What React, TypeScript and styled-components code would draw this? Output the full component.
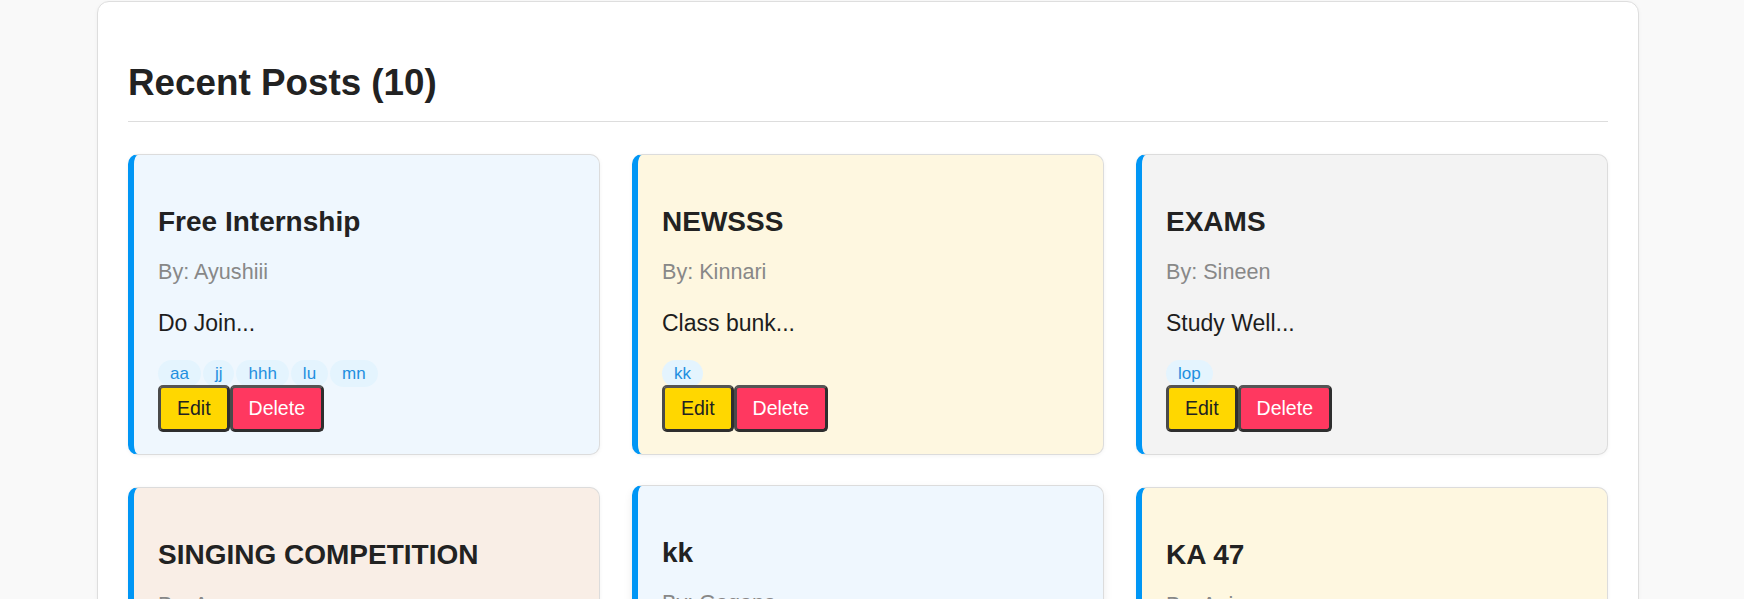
import React from "react";
import styled, { createGlobalStyle } from "styled-components";

const GlobalStyle = createGlobalStyle`
  html, body {
    margin: 0;
    padding: 0;
    background: #f9f9f9;
    overflow: hidden;
  }
  body {
    font-family: "Liberation Sans", Arial, sans-serif;
    color: #222;
  }
  * { box-sizing: border-box; }
`;

const Page = styled.div`
  padding: 1px 0 0 97px;
`;

const Panel = styled.section`
  width: 1542px;
  background: #ffffff;
  border: 1px solid #dedede;
  border-radius: 12px;
  box-shadow: 0 1px 4px rgba(0, 0, 0, 0.04);
  padding: 30px 30px 40px;
`;

const Heading = styled.h2`
  margin: 30px 0 0;
  font-size: 36.8px;
  line-height: 42px;
  font-weight: 700;
  color: #222;
  padding-bottom: 17px;
  border-bottom: 1px solid #dddddd;
`;

const Grid = styled.div`
  margin-top: 32px;
  display: grid;
  grid-template-columns: repeat(3, 1fr);
  column-gap: 32px;
  row-gap: 32px;
`;

const Card = styled.article<{ $bg: string; $raised?: boolean }>`
  background: ${(p) => p.$bg};
  border: 1px solid #dcdcdc;
  border-left: 6px solid #0096f5;
  border-radius: 10px;
  padding: 24px 24px 22px 24px;
  box-shadow: ${(p) =>
    p.$raised ? "0 4px 10px rgba(0,0,0,0.08)" : "0 1px 4px rgba(0,0,0,0.05)"};
  transform: ${(p) => (p.$raised ? "translateY(-2px)" : "none")};
`;

const Title = styled.h3`
  margin: 27px 0 0;
  font-size: 28px;
  line-height: 32px;
  font-weight: 700;
  color: #222;
`;

const Meta = styled.p`
  margin: 21px 0 0;
  font-size: 21.6px;
  line-height: 25px;
  color: #888888;
`;

const Body = styled.p`
  margin: 26px 0 0;
  font-size: 23px;
  line-height: 26px;
  color: #1d1d1d;
`;

const TagRow = styled.div`
  margin-top: 28px;
  display: flex;
  gap: 2px;
  height: 19px;
  align-items: center;
`;

const Tag = styled.span`
  display: inline-block;
  padding: 4px 12px;
  font-size: 17px;
  line-height: 19px;
  color: #1f8fe0;
  background: #e4f4fe;
  border-radius: 14px;
`;

const Actions = styled.div`
  margin-top: 2px;
  display: flex;
  gap: 0;
`;

const Button = styled.button<{ $variant: "edit" | "delete" }>`
  font-family: "Liberation Sans", Arial, sans-serif;
  font-size: 19.5px;
  line-height: 23px;
  padding: 9px 16px;
  border: 3px solid #2e2e2e;
  border-top-color: #555;
  border-left-color: #4a4a4a;
  border-radius: 5px;
  cursor: pointer;
  background: ${(p) => (p.$variant === "edit" ? "#ffd700" : "#ff3860")};
  color: ${(p) => (p.$variant === "edit" ? "#222" : "#ffffff")};
`;

type Post = {
  title: string;
  author: string;
  body: string;
  tags: string[];
  bg: string;
  raised?: boolean;
};

const posts: Post[] = [
  { title: "Free Internship", author: "Ayushiii", body: "Do Join...", tags: ["aa", "jj", "hhh", "lu", "mn"], bg: "#eff7fe" },
  { title: "NEWSSS", author: "Kinnari", body: "Class bunk...", tags: ["kk"], bg: "#fef7e0" },
  { title: "EXAMS", author: "Sineen", body: "Study Well...", tags: ["lop"], bg: "#f3f3f3" },
  { title: "SINGING COMPETITION", author: "Anu", body: "Register now...", tags: ["music"], bg: "#f9eee6" },
  { title: "kk", author: "Gagana", body: "kk...", tags: ["kk"], bg: "#eff7fe", raised: true },
  { title: "KA 47", author: "Anju", body: "Details...", tags: ["ka"], bg: "#fef7e0" },
  { title: "Sports Day", author: "Kinnari", body: "Be there...", tags: ["fun"], bg: "#f3f3f3" },
  { title: "Hackathon", author: "Sineen", body: "Code all night...", tags: ["dev"], bg: "#f9eee6" },
  { title: "Library", author: "Ayushiii", body: "New books...", tags: ["read"], bg: "#eff7fe" },
  { title: "Fest", author: "Gagana", body: "See you...", tags: ["fest"], bg: "#fef7e0" },
];

export default function App() {
  return (
    <>
      <GlobalStyle />
      <Page>
        <Panel>
          <Heading>Recent Posts ({posts.length})</Heading>
          <Grid>
            {posts.map((p, i) => (
              <Card key={i} $bg={p.bg} $raised={p.raised}>
                <Title>{p.title}</Title>
                <Meta>By: {p.author}</Meta>
                <Body>{p.body}</Body>
                <TagRow>
                  {p.tags.map((t) => (
                    <Tag key={t}>{t}</Tag>
                  ))}
                </TagRow>
                <Actions>
                  <Button $variant="edit">Edit</Button>
                  <Button $variant="delete">Delete</Button>
                </Actions>
              </Card>
            ))}
          </Grid>
        </Panel>
      </Page>
    </>
  );
}
